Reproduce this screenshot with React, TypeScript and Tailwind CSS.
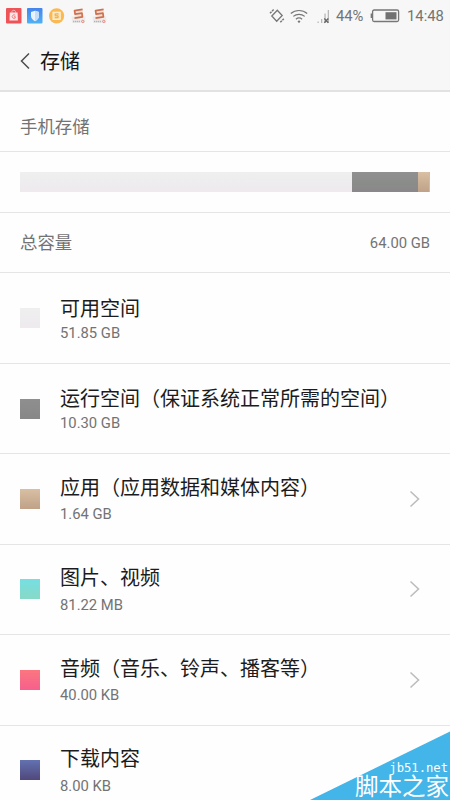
const rows = [
  { title: '可用空间', size: '51.85 GB', swatch: 'from-[#efefef] to-[#eeeaee]', link: false, tight: true },
  { title: '运行空间（保证系统正常所需的空间）', size: '10.30 GB', swatch: 'from-[#8f8f8f] to-[#878787]', link: false, tight: true },
  { title: '应用（应用数据和媒体内容）', size: '1.64 GB', swatch: 'from-[#d9bfa3] to-[#bfa288]', link: true },
  { title: '图片、视频', size: '81.22 MB', swatch: 'from-[#75dfe2] to-[#87d9c6]', link: true },
  { title: '音频（音乐、铃声、播客等）', size: '40.00 KB', swatch: 'from-[#fa7680] to-[#f75f8b]', link: true },
  { title: '下载内容', size: '8.00 KB', swatch: 'from-[#6272b0] to-[#50487d]', link: false },
]

function SogouIcon() {
  return (
    <svg width="16" height="16" viewBox="0 0 16 16" fill="none">
      <path d="M.5 8.500h14l-.5 6.500H1z" fill="#ececec" />
      <path d="M2.500 2.300 11.500 1l1 8.500-8.500 1.500z" fill="#f3e3da" />
      <path d="M11.600 1.400 3.600 2.600l.5 3.500 6.800-1 .5 3.700-7.900 1.300" stroke="#d0704f" strokeWidth="1.700" strokeLinejoin="round" />
      <path d="M2 13.500h7.500" stroke="#b4b4b4" strokeWidth="1.500" strokeDasharray="1.300 .6" />
      <circle cx="11.800" cy="13.400" r="1.200" stroke="#e08076" strokeWidth=".9" />
    </svg>
  )
}

function StatusBar() {
  return (
    <div className="flex h-8 items-center justify-between px-[6px] text-[#747474]">
      <div className="flex items-center">
        <svg width="16" height="16" viewBox="0 0 16 16" fill="none">
          <rect width="15.500" height="15.500" rx="1" fill="#ee5358" />
          <path d="M5.900 4.500V3.600c0-1.700 3.600-1.700 3.600 0v.9" stroke="#f7b5b7" />
          <path d="M3.800 4.500h7.800l.3 8H3.500z" fill="#fbe7e7" />
          <path d="M9.300 7.300a1.800 1.800 0 1 0 0 2.600V8.700H8" stroke="#ee7477" strokeWidth=".9" />
        </svg>
        <svg className="ml-[5px]" width="16" height="16" viewBox="0 0 16 16">
          <defs>
            <linearGradient id="shield" x1="0" y1="0" x2="0" y2="1">
              <stop stopColor="#4583ea" />
              <stop offset="1" stopColor="#4fb2f6" />
            </linearGradient>
          </defs>
          <rect width="15.500" height="15.500" rx="1" fill="url(#shield)" />
          <path d="M8 2.800 12 4v4c0 2.500-1.800 4-4 5.200C5.800 12 4 10.500 4 8V4z" fill="#e9f3fd" />
          <path d="M8 2.800 12 4v4c0 2.500-1.800 4-4 5.200z" fill="#c6ddf8" />
        </svg>
        <svg className="ml-[6px]" width="16" height="16" viewBox="0 0 16 16" fill="none">
          <circle cx="7.600" cy="7.800" r="7.600" fill="#fab951" />
          <rect x="4" y="4.200" width="7.200" height="7.200" fill="#fbdfae" stroke="#fff4df" strokeWidth="1" />
          <path d="M9.500 5.900H6.200v1.900h2.900v1.900H5.800" stroke="#f2a93b" />
        </svg>
        <span className="ml-[6px]"><SogouIcon /></span>
        <span className="ml-[5px]"><SogouIcon /></span>
      </div>
      <div className="flex items-center">
        <svg width="16" height="16" viewBox="0 0 16 16" fill="none" stroke="#777" strokeWidth="1.300">
          <path d="M8.300 2.200 13.200 7.500 7.700 13.300 2.800 8z" />
          <path d="M1 5.300 4.700 1.500M11.300 14.300l3.500-3.600" strokeWidth="1.500" strokeDasharray="2.200 .8" />
        </svg>
        <svg className="ml-[5px]" width="18" height="15" viewBox="0 0 18 15" fill="none" stroke="#777" strokeWidth="1.200">
          <path d="M.8 4.500c4.700-4 11.700-4 16.400 0M3.300 7.400c3.300-2.800 8.100-2.800 11.400 0M5.900 10.200c1.800-1.500 4.400-1.500 6.200 0" />
          <circle cx="9" cy="12.600" r="1.200" fill="#777" stroke="none" />
        </svg>
        <svg className="ml-[9px]" width="13" height="16" viewBox="0 0 13 16">
          <path d="M.5 13.500h1.300V15H.5zM4 11h1.300v4H4zM7.400 5.500h1.300V15H7.400zM10.700 2H12v13h-1.300z" fill="#b8b8b8" />
          <path d="m7.300 10.500 4 4.200m0-4.200-4 4.200" stroke="#666" strokeWidth="1.400" />
        </svg>
        <span className="ml-[6px] w-[28px] pt-px text-[14.800px] tracking-[-0.1px] whitespace-nowrap">44%</span>
        <svg className="ml-[6px]" width="30" height="14" viewBox="0 0 30 14" fill="none">
          <rect x="2.600" y="1" width="26" height="11.500" rx="1.500" stroke="#777" strokeWidth="1.300" />
          <path d="M1.400 4.500V9" stroke="#777" strokeWidth="1.500" />
          <path d="M15.500 3.200h11v7.200h-11z" fill="#727272" />
        </svg>
        <span className="ml-[7px] w-[37px] pt-px text-[14.800px] whitespace-nowrap">14:48</span>
      </div>
    </div>
  )
}

function Watermark() {
  return (
    <div className="absolute right-0 bottom-0 h-[70px] w-[142px] text-white">
      <svg className="absolute inset-0" width="142" height="70" viewBox="0 0 142 70">
        <path d="M142 1.500V70H2z" fill="#43b5e8" />
      </svg>
      <div className="relative flex h-full flex-col items-end justify-end whitespace-nowrap">
        <div className="pr-[2px] font-['DejaVu_Sans_Mono',monospace] text-[12.200px] leading-[14px]">jb51.net</div>
        <div className="pr-px text-[23.500px] leading-[25px]">脚本之家</div>
      </div>
    </div>
  )
}

export default function App() {
  return (
    <div className="relative h-[800px] w-[450px] overflow-hidden bg-[#fefefe] font-[Roboto,'Noto_Sans_CJK_SC',sans-serif] text-[#737373]">
      <header className="h-[91.500px] border-b-2 border-[#e2e2e2] bg-[#f7f7f7]">
        <StatusBar />
        <div className="flex h-[58px] items-center pl-5">
          <svg width="10" height="18" viewBox="0 0 10 18" fill="none" stroke="#4c4c4c" strokeWidth="1.500">
            <path d="M9 1.500 1.500 9 9 16.500" />
          </svg>
          <h1 className="ml-[10px] pt-px text-[20px] leading-[28px] text-[#161616]">存储</h1>
        </div>
      </header>

      <main>
        <div className="flex h-[60.500px] items-center border-b border-[#e5e5e5] pt-[12px] pl-5 text-[17.400px]">手机存储</div>
        <div className="flex h-[60.500px] items-center border-b border-[#e5e5e5] px-5">
          <div className="flex h-5 w-[410px]">
            <div className="w-[332px] bg-linear-to-b from-[#efefef] to-[#eeeaee]" />
            <div className="w-[66px] bg-linear-to-b from-[#918f92] via-[#8a8d89] to-[#8b878c]" />
            <div className="w-[10.500px] bg-linear-to-b from-[#d9bfa3] to-[#bfa288]" />
            <div className="w-[1.500px] bg-[#86d9cd]" />
          </div>
        </div>
        <div className="flex h-[60.900px] items-center justify-between border-b border-[#e5e5e5] px-5 pt-[2px]">
          <span className="text-[17.400px]">总容量</span>
          <span className="text-[14.800px]">64.00 GB</span>
        </div>

        <ul>
          {rows.map((row) => (
            <li key={row.title} className="flex h-[90.450px] items-center border-b border-[#e5e5e5] pr-[30px] pl-5">
              <div className={`h-5 w-5 shrink-0 bg-linear-to-b ${row.swatch}`} />
              <div className="ml-5 flex-1 pt-[1.500px] whitespace-nowrap">
                <div className="text-[20px] leading-[28px] text-[#1c1c1c]">{row.title}</div>
                <div className={row.tight ? 'text-[14.800px] leading-[20px]' : 'pt-[1.500px] text-[14.800px] leading-[22px]'}>{row.size}</div>
              </div>
              {row.link && (
                <svg width="11" height="18" viewBox="0 0 11 18" fill="none" stroke="#bdbdbd" strokeWidth="1.600">
                  <path d="M1.500 1.500 9.500 9l-8 7.500" />
                </svg>
              )}
            </li>
          ))}
        </ul>
      </main>

      <Watermark />
    </div>
  )
}
